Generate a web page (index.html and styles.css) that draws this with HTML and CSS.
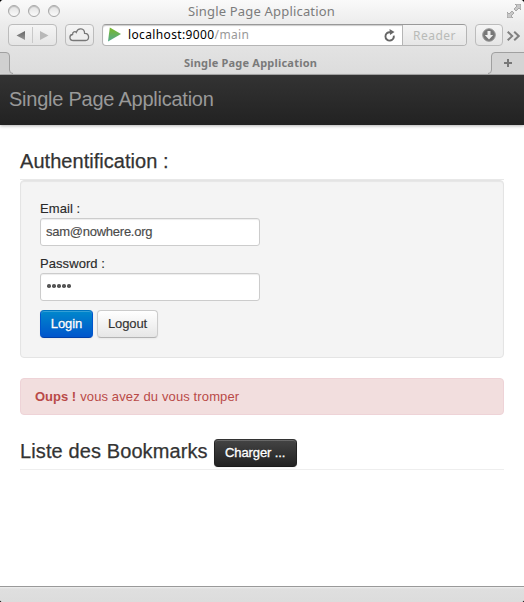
FILE: index.html
```html
<!DOCTYPE html>
<html lang="fr">
<head>
<meta charset="utf-8">
<title>Single Page Application</title>
<link rel="stylesheet" href="styles.css">
</head>
<body>
<div class="window">
  <header class="chrome">
    <div class="titlebar">
      <div class="lights"><i></i><i></i><i></i></div>
      <span class="window-title">Single Page Application</span>
      <svg class="fullscreen" width="14" height="14" viewBox="0 0 14 14"><path d="M8 0h6v6l-2-2-3 3-2-2 3-3zM0 8l2 2 3-3 2 2-3 3 2 2H0z" fill="#c8c8c8" stroke="#999" stroke-width=".8"/></svg>
    </div>
    <div class="toolbar">
      <div class="box nav"><svg width="49" height="22" viewBox="0 0 49 22"><defs><linearGradient id="arrow" x2="0" y2="1"><stop stop-color="#666"/><stop offset="1" stop-color="#999"/></linearGradient></defs><path d="M8.500 11.500l8.500-4.500v9z" fill="url(#arrow)"/><path d="M40.500 11.500l-8.500-4.500v9z" fill="#b8b8b8"/><path d="M24.500 3v16" stroke="#c9c9c9"/></svg></div>
      <div class="box cloud"><svg width="29" height="22" viewBox="0 0 29 22"><path d="M8.500 16.500C3.800 16.500 4 10.800 7.600 10.500C7.300 7.700 10.300 6.900 11.300 8.300C13 3.300 19.500 4 19.600 9.300C24.500 9 25 16.500 20.500 16.500Z" fill="#eee" stroke="#777" stroke-width="1.300"/></svg></div>
      <div class="address">
        <svg width="14" height="16" viewBox="0 0 14 16"><defs><linearGradient id="play" x2="0" y2="1"><stop stop-color="#79b928"/><stop offset="1" stop-color="#55a98f"/></linearGradient></defs><path d="M1.800 .5L13 7.100 0 14.500z" fill="url(#play)"/></svg>
        <span class="url">localhost:9000<em>/main</em></span>
        <svg class="reload" width="12" height="13" viewBox="0 0 12 13"><path d="M9.800 6.700A4.200 4.200 0 1 1 6 3.200" fill="none" stroke="#666" stroke-width="1.900"/><path d="M5.500 0L10.500 2.900 6 6z" fill="#666"/></svg>
        <span class="reader">Reader</span>
      </div>
      <div class="box download"><svg width="28" height="22" viewBox="0 0 28 22"><circle cx="14" cy="11" r="6.300" fill="#777" stroke="#999"/><path d="M12.500 7h3v4h2.700L14 15.500 9.800 11h2.700z" fill="#eee"/></svg></div>
      <svg class="more" width="13" height="10" viewBox="0 0 13 10"><path d="M0.700 .7L5.200 5 .7 9.300M7.200 .7L11.700 5 7.200 9.300" fill="none" stroke="#808080" stroke-width="2"/></svg>
    </div>
    <div class="tabs">
      <svg class="tab-side" width="14" height="22" viewBox="0 0 14 22"><path d="M0 .5H6Q9.500 .5 9.500 4V18Q9.500 21.500 13 21.500H0z" fill="#d0d0d0"/><path d="M0 .5H6Q9.500 .5 9.500 4V18Q9.500 21.500 13 21.500" fill="none" stroke="#a0a0a0"/></svg>
      <div class="tab"><span>Single Page Application</span></div>
      <svg class="tab-side" width="37" height="22" viewBox="0 0 37 22"><path d="M37 .5H8Q4.500 .5 4.500 4V18Q4.500 21.500 1 21.500H37z" fill="#d4d4d4"/><path d="M37 .5H8Q4.500 .5 4.500 4V18Q4.500 21.500 1 21.500" fill="none" stroke="#a0a0a0"/><path d="M21 7v8M17 11h8" stroke="#777" stroke-width="2"/></svg>
    </div>
  </header>
  <div class="navbar"><span class="brand">Single Page Application</span></div>
  <main>
    <h1 class="section-title auth"><span>Authentification :</span></h1>
    <form class="well">
      <label for="email">Email :</label>
      <input id="email" type="text" value="sam@nowhere.org">
      <label for="password">Password :</label>
      <div class="field"><i></i><i></i><i></i><i></i><i></i></div>
      <div class="actions">
        <button type="button" class="btn primary">Login</button>
        <button type="button" class="btn logout">Logout</button>
      </div>
    </form>
    <div class="alert"><strong>Oups !</strong><span>vous avez du vous tromper</span></div>
    <h1 class="section-title bookmarks"><span>Liste des Bookmarks</span><button type="button" class="btn dark">Charger ...</button></h1>
  </main>
  <footer class="statusbar"></footer>
</div>
</body>
</html>
```
FILE: styles.css
```css
* { box-sizing: border-box; }
body { margin: 0; background: #000; font-family: "Liberation Sans", sans-serif; font-size: 13px; color: #333; }
.window { width: 524px; height: 602px; display: flex; flex-direction: column; background: #fff; border-radius: 4px 4px 3px 3px; overflow: hidden; }
.chrome { height: 75px; flex: none; background: linear-gradient(#fafafa, #ececec 24px, #e2e2e2 50px, #dcdcdc); border-bottom: 1px solid #aaa; font-family: "Noto Sans", sans-serif; }
.titlebar { height: 24px; display: grid; grid-template-columns: 54px 1fr 60px; align-items: center; padding: 0 3px 0 8px; }
.lights { display: flex; gap: 8px; padding-bottom: 2px; }
.lights i { width: 12px; height: 12px; flex: none; border: 1px solid #a8a8a8; border-radius: 50%; background: linear-gradient(#e2e2e2, #fafafa); box-shadow: inset 0 1px 1px #bbb; }
.window-title { text-align: center; font-size: 13px; line-height: 20px; padding-bottom: 2px; letter-spacing: .18px; color: #7c7c7c; white-space: nowrap; }
.fullscreen { justify-self: end; margin-bottom: 2px; }
.toolbar { height: 28px; display: flex; align-items: flex-start; padding: 0 3px 0 8px; }
.box { height: 22px; flex: none; border: 1px solid #bcbcbc; border-radius: 4px; background: linear-gradient(#f5f5f5, #e5e5e5); }
.box svg { display: block; margin: -1px; }
.nav { width: 49px; margin-right: 8px; }
.cloud { width: 29px; margin-right: 8px; }
.address { width: 365px; height: 22px; flex: none; display: flex; align-items: center; padding-left: 5px; border: 1px solid #b5b5b5; border-top-color: #999; border-radius: 4px; background: #fff; box-shadow: inset 0 1px 1px #ccc; overflow: hidden; }
.url { margin-left: 6px; font-size: 12px; line-height: 22px; letter-spacing: .37px; color: #000; white-space: nowrap; }
.url em { font-style: normal; color: #999; }
.reload { margin-left: auto; margin-right: 6px; }
.reader { width: 64px; height: 20px; line-height: 22px; text-align: center; font-size: 12px; letter-spacing: .5px; color: #b9bbb8; border-left: 1px solid #b5b5b5; background: linear-gradient(#f4f4f4, #e6e6e6); }
.download { width: 28px; margin-left: 8px; }
.more { margin: 7px 0 0 4px; }
.tabs { height: 22px; display: flex; }
.tab-side { display: block; flex: none; }
.tab { flex: 1; text-align: center; font-size: 11px; font-weight: 700; line-height: 22px; letter-spacing: .21px; color: #7a7a7a; white-space: nowrap; }
.navbar { position: relative; height: 50px; flex: none; display: flex; padding: 0 9px; background: linear-gradient(#333, #222); box-shadow: 0 1px 3px rgba(0,0,0,.3); }
.brand { font-size: 20px; line-height: 49px; letter-spacing: -.24px; color: #999; white-space: nowrap; }
main { flex: 1; padding: 0 20px; }
.section-title { margin: 0; font-size: 20px; font-weight: 400; white-space: nowrap; border-bottom: 1px solid #eee; }
.section-title span { -webkit-text-stroke: .25px #333; }
.auth { height: 55px; padding-top: 26px; line-height: 20px; letter-spacing: .04px; border-bottom-color: #e8e8e8; }
.well { height: 178px; padding: 19px; border: 1px solid #e4e4e4; border-radius: 4px; background: #f4f4f4; box-shadow: inset 0 1px 1px rgba(0,0,0,.06); }
label { display: block; height: 18px; line-height: 18px; letter-spacing: .07px; color: #2a2a2a; -webkit-text-stroke: .15px #2a2a2a; }
input, .field { display: flex; align-items: center; width: 220px; height: 28px; margin: 0 0 9px; padding: 0 5px 1px; border: 1px solid #ccc; border-radius: 3px; background: #fff; font: 13px "Liberation Sans", sans-serif; color: #4a4a4a; letter-spacing: -.25px; -webkit-text-stroke: .15px #4a4a4a; box-shadow: inset 0 1px 1px rgba(0,0,0,.075); }
.field { gap: 1.500px; padding: 0 6px 2px; }
.field i { width: 3.500px; height: 3.500px; border-radius: 50%; background: #555; }
.actions { display: flex; gap: 4px; }
.btn { height: 28px; padding: 0; border: 1px solid #ccc; border-bottom-color: #b3b3b3; border-radius: 4px; background: linear-gradient(#fff, #e6e6e6); color: #333; font: 13px/18px "Liberation Sans", sans-serif; padding-bottom: 1px; letter-spacing: -.1px; white-space: nowrap; -webkit-text-stroke: .15px #333; box-shadow: inset 0 1px 0 rgba(255,255,255,.2), 0 1px 2px rgba(0,0,0,.05); }
.primary { width: 53px; border-color: #0074c0 #0055cc #003fa8; background: linear-gradient(#0088cc, #0055cc); color: #fff; text-shadow: 0 -1px 0 rgba(0,0,0,.25); -webkit-text-stroke: .3px #fff; }
.logout { width: 61px; }
.dark { width: 83px; border-color: #333 #222 #1a1a1a; background: linear-gradient(#444, #222); color: #fff; text-shadow: 0 -1px 0 rgba(0,0,0,.25); -webkit-text-stroke: .3px #fff; }
.alert { height: 37px; margin-top: 20px; padding: 0 14px; display: flex; gap: 4px; line-height: 35px; border: 1px solid #eed3d7; border-radius: 4px; background: #f2dede; color: #b94a48; white-space: nowrap; }
.alert span { letter-spacing: .12px; }
.bookmarks { height: 55px; padding-top: 24px; display: flex; align-items: flex-start; gap: 6px; line-height: 24px; letter-spacing: .11px; }
.statusbar { height: 16px; flex: none; border-top: 1px solid #999; background: linear-gradient(#eee, #dfdfdf 2px, #dcdcdc); }
```
